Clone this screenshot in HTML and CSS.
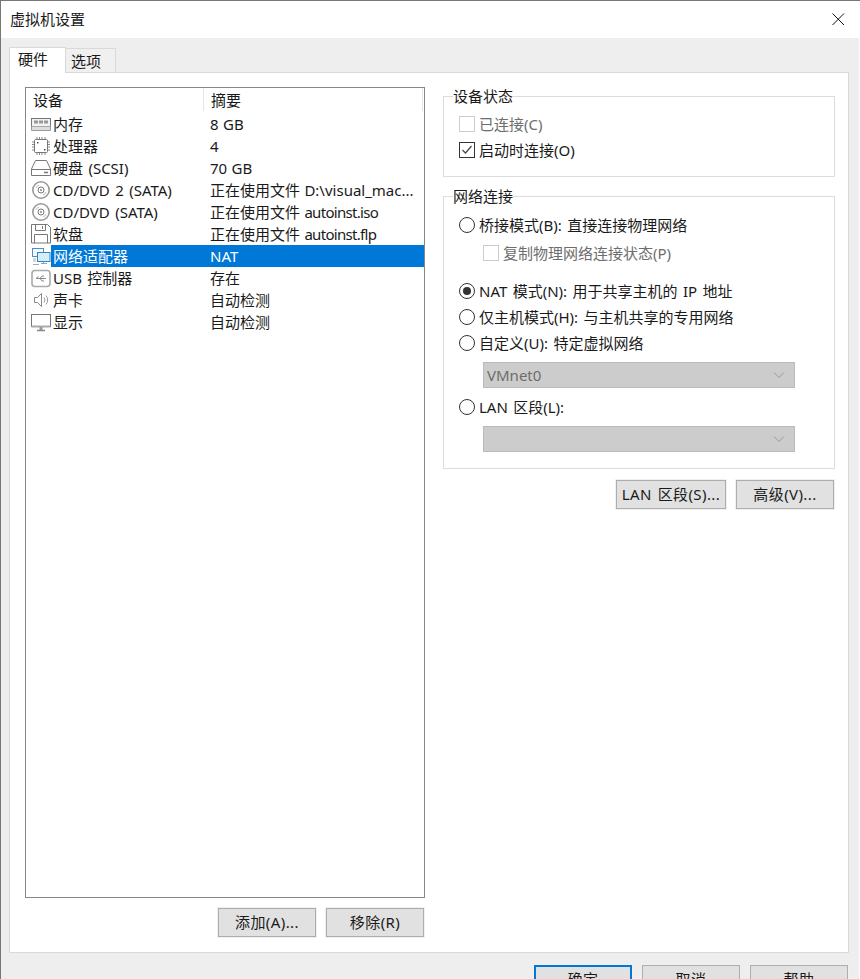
FILE: index.html
```html
<!DOCTYPE html>
<html lang="zh-CN">
<head>
    <meta charset="UTF-8">
    <meta name="viewport" content="width=device-width, initial-scale=1.0">
    <title>虚拟机设置</title>
    <link rel="stylesheet" href="styles.css">
</head>
<body>
    <div class="window">
        <div class="titlebar">
            <span class="title">虚拟机设置</span>
            <svg class="close" width="16" height="16" viewBox="0 0 16 16"><path d="M2.500 2.500l11.500 11.500M14 2.500L2.500 14" stroke="#111" stroke-width="1" fill="none"/></svg>
        </div>

        <div class="dialog">
            <div class="tabs">
                <div class="tab tab-active">硬件</div>
                <div class="tab">选项</div>
            </div>

            <div class="panel">
                <div class="left-col">
                    <div class="device-list">
                        <div class="list-head">
                            <div class="head-name">设备</div>
                            <div class="head-value">摘要</div>
                        </div>

                        <div class="row">
                            <svg class="icon" viewBox="0 0 20 20"><rect x="0.500" y="4.500" width="19" height="8" fill="#f2f2f2" stroke="#777"/><path d="M3 6.500h4v3H3zM8 6.500h4v3H8zM13 6.500h4v3h-4z" fill="#999"/><path d="M0.500 12.500v4h19v-4" fill="#ddd" stroke="#999"/></svg>
                            <div class="row-body"><span class="name">内存</span><span class="value">8 GB</span></div>
                        </div>
                        <div class="row">
                            <svg class="icon" viewBox="0 0 20 20"><rect x="3.500" y="3.500" width="13" height="13" rx="1" fill="#fff" stroke="#777"/><path d="M6 1v2M8.500 1v2M11 1v2M14 1v2M6 17v2M8.500 17v2M11 17v2M14 17v2M1 6h2M1 8.500h2M1 11h2M1 14h2M17 6h2M17 8.500h2M17 11h2M17 14h2" stroke="#888"/><path d="M6 6h1.500v1.500H6zM13 13h1.500v1.500H13z" fill="#555"/></svg>
                            <div class="row-body"><span class="name">处理器</span><span class="value">4</span></div>
                        </div>
                        <div class="row">
                            <svg class="icon" viewBox="0 0 20 20"><path d="M4.500 2.500h11l4 8.500v6.500H0.500V11z" fill="#fff" stroke="#777"/><path d="M0.500 11.500h19" stroke="#777"/><path d="M13 14.500h4" stroke="#777" stroke-width="1.500"/></svg>
                            <div class="row-body"><span class="name">硬盘 (SCSI)</span><span class="value">70 GB</span></div>
                        </div>
                        <div class="row">
                            <svg class="icon" viewBox="0 0 20 20"><circle cx="10" cy="10" r="8.200" fill="#fff" stroke="#999" stroke-width="1.600"/><circle cx="10" cy="10" r="3" fill="none" stroke="#777"/><circle cx="10" cy="10" r="1" fill="#888"/><path d="M5 8a5.500 5.500 0 0 1 3-3M15 12a5.500 5.500 0 0 1-3 3" fill="none" stroke="#bbb"/></svg>
                            <div class="row-body"><span class="name">CD/DVD 2 (SATA)</span><span class="value">正在使用文件 D:\visual_mac...</span></div>
                        </div>
                        <div class="row">
                            <svg class="icon" viewBox="0 0 20 20"><circle cx="10" cy="10" r="8.200" fill="#fff" stroke="#999" stroke-width="1.600"/><circle cx="10" cy="10" r="3" fill="none" stroke="#777"/><circle cx="10" cy="10" r="1" fill="#888"/><path d="M5 8a5.500 5.500 0 0 1 3-3M15 12a5.500 5.500 0 0 1-3 3" fill="none" stroke="#bbb"/></svg>
                            <div class="row-body"><span class="name">CD/DVD (SATA)</span><span class="value">正在使用文件 <span class="file">autoinst.iso</span></span></div>
                        </div>
                        <div class="row">
                            <svg class="icon" viewBox="0 0 20 20"><path d="M0.500 0.500h16l3 3v15.500H0.500z" fill="#fff" stroke="#777"/><path d="M4.500 0.500v6h10v-6M3.500 19v-8.500h13V19" fill="none" stroke="#777"/><path d="M11.500 2v3" stroke="#777"/></svg>
                            <div class="row-body"><span class="name">软盘</span><span class="value">正在使用文件 <span class="file">autoinst.flp</span></span></div>
                        </div>
                        <div class="row row-selected">
                            <svg class="icon" viewBox="0 0 20 20"><rect x="1.500" y="2.500" width="11" height="8" fill="#f4f8fb" stroke="#4f8fc0"/><rect x="6.500" y="6.500" width="12.500" height="9" fill="#d8ecf8" stroke="#2f86c4"/><path d="M10 17.500h6M12.500 15.500v2" stroke="#7aa9c9"/><path d="M2 13h3M2 15h3M2 18.500h6" stroke="#aaa"/></svg>
                            <div class="row-body"><span class="name">网络适配器</span><span class="value">NAT</span></div>
                        </div>
                        <div class="row">
                            <svg class="icon" viewBox="0 0 20 20"><rect x="1" y="2.500" width="18" height="16" rx="3" fill="#fff" stroke="#aaa" stroke-width="1.600"/><path d="M5 10.500h10M5 10.500l2.500-2M9 10.500l2-2.500h2M9 10.500l2 2.500h2" fill="none" stroke="#888"/></svg>
                            <div class="row-body"><span class="name">USB 控制器</span><span class="value">存在</span></div>
                        </div>
                        <div class="row">
                            <svg class="icon" viewBox="0 0 20 20"><path d="M3.500 7.500h3l4-4v13l-4-4h-3z" fill="#fff" stroke="#888"/><path d="M13 7.500a4 4 0 0 1 0 5M15 5.500a7 7 0 0 1 0 9" fill="none" stroke="#999"/></svg>
                            <div class="row-body"><span class="name">声卡</span><span class="value">自动检测</span></div>
                        </div>
                        <div class="row">
                            <svg class="icon" viewBox="0 0 20 20"><rect x="0.500" y="2.500" width="19" height="12" fill="#fff" stroke="#777"/><path d="M0.500 14.500h19" stroke="#aaa" stroke-width="2"/><path d="M6 18.500h8" stroke="#888" stroke-width="1.500"/><path d="M10 15v3" stroke="#999" stroke-width="3"/></svg>
                            <div class="row-body"><span class="name">显示</span><span class="value">自动检测</span></div>
                        </div>
                    </div>
                    <div class="btn-row">
                        <button class="btn">添加(A)...</button>
                        <button class="btn">移除(R)</button>
                    </div>
                </div>

                <div class="right-col">
                    <div class="group">
                        <div class="legend">设备状态</div>
                        <div class="option option-first disabled"><span class="check"></span>已连接(C)</div>
                        <div class="option">
                            <span class="check check-on"><svg width="14" height="14" viewBox="0 0 14 14"><path d="M2.500 7l3 3 6-7" fill="none" stroke="#444" stroke-width="1.200"/></svg></span>启动时连接(O)
                        </div>
                    </div>

                    <div class="group group-net">
                        <div class="legend">网络连接</div>
                        <div class="option option-bridge"><span class="radio"></span>桥接模式(B): 直接连接物理网络</div>
                        <div class="option sub disabled"><span class="check"></span>复制物理网络连接状态(P)</div>
                        <div class="option option-nat"><span class="radio radio-on"></span>NAT 模式(N): 用于共享主机的 IP 地址</div>
                        <div class="option"><span class="radio"></span>仅主机模式(H): 与主机共享的专用网络</div>
                        <div class="option"><span class="radio"></span>自定义(U): 特定虚拟网络</div>
                        <div class="combo">
                            <span class="combo-text">VMnet0</span>
                            <svg width="12" height="8" viewBox="0 0 12 8"><path d="M1 1.500l5 5 5-5" fill="none" stroke="#999"/></svg>
                        </div>
                        <div class="option option-lan"><span class="radio"></span>LAN 区段(L):</div>
                        <div class="combo">
                            <span class="combo-text"></span>
                            <svg width="12" height="8" viewBox="0 0 12 8"><path d="M1 1.500l5 5 5-5" fill="none" stroke="#999"/></svg>
                        </div>
                    </div>

                    <div class="btn-row net-buttons">
                        <button class="btn btn-lan">LAN 区段(S)...</button>
                        <button class="btn">高级(V)...</button>
                    </div>
                </div>
            </div>

            <div class="footer">
                <button class="btn btn-default">确定</button>
                <button class="btn">取消</button>
                <button class="btn">帮助</button>
            </div>
        </div>
    </div>
</body>
</html>
```

FILE: styles.css
```css
* {
    margin: 0;
    padding: 0;
    box-sizing: border-box;
    font-family: "Noto Sans", "Noto Sans CJK SC", sans-serif;
}

html, body {
    height: 100%;
    overflow: hidden;
    background: #fff;
}

body {
    font-size: 15px;
    color: #1a1a1a;
    word-spacing: 1.5px;
}

.window {
    width: 860px;
    height: 979px;
    overflow: hidden;
    border-top: 1px solid #777;
    border-left: 1px solid #777;
}

.titlebar {
    height: 37px;
    padding: 0 13px 1px 9px;
    display: flex;
    justify-content: space-between;
    align-items: center;
}

.title {
    line-height: 36px;
}

.close {
    margin-right: 1px;
}

.dialog {
    width: 858px;
    background: #eee;
    padding: 8px 0 0 8px;
    height: 941px;
}

.tabs {
    display: flex;
    align-items: flex-end;
    height: 26px;
}

.tab {
    width: 50px;
    height: 24px;
    background: #f0f0f0;
    border: 1px solid #d9d9d9;
    border-left: none;
    border-bottom: none;
    padding-left: 5px;
    line-height: 24px;
}

.tab-active {
    width: 57px;
    height: 26px;
    background: #fff;
    border-left: 1px solid #d9d9d9;
    padding-left: 8px;
    line-height: 22px;
    position: relative;
    top: 1px;
}

.panel {
    width: 840px;
    height: 881px;
    background: #fff;
    border: 1px solid #d9d9d9;
    padding: 14px 0 0 15px;
    display: flex;
    gap: 18px;
}

.left-col {
    width: 400px;
}

.device-list {
    height: 811px;
    border: 1px solid #828790;
}

.list-head {
    display: flex;
    height: 25px;
    line-height: 25px;
}

.head-name {
    width: 178px;
    padding-left: 7px;
    height: 23px;
    border-right: 1px solid #e5e5e5;
}

.head-value {
    flex: 1;
    padding-left: 7px;
    height: 23px;
    border-right: 1px solid #e5e5e5;
    margin-right: 1px;
}

.row {
    display: flex;
    align-items: center;
    height: 22px;
    padding-left: 5px;
}

.icon {
    width: 20px;
    height: 20px;
    flex: none;
}

.row-body {
    flex: 1;
    display: flex;
    height: 22px;
    line-height: 22px;
    padding-left: 2px;
}

.name {
    width: 157px;
    white-space: nowrap;
}

.value {
    white-space: nowrap;
    word-spacing: 0.5px;
}

.file {
    letter-spacing: -0.7px;
}

.row-selected .row-body {
    background: #0078d7;
    color: #fff;
}

.btn-row {
    display: flex;
    justify-content: flex-end;
    gap: 10px;
    margin: 10px 1px 0 0;
}

.btn {
    width: 98px;
    height: 29px;
    padding-bottom: 2px;
    background: #e1e1e1;
    border: 1px solid #adadad;
    box-shadow: 0 0 0 1px #f0f0f0;
    font-size: 15px;
    letter-spacing: 0.4px;
    word-spacing: 1.5px;
    color: #1a1a1a;
    white-space: nowrap;
}

.btn-lan {
    width: 110px;
}

.btn-default {
    border: 2px solid #0078d7;
}

.right-col {
    width: 392px;
    padding-top: 9px;
}

.group {
    border: 1px solid #dcdcdc;
    padding: 0 15px 13px;
}

.group-net {
    margin-top: 19px;
    padding-bottom: 16px;
}

.legend {
    width: fit-content;
    height: 20px;
    margin: -10px 0 0 -6px;
    line-height: 18px;
    background: #fff;
}

.option {
    display: flex;
    align-items: center;
    gap: 4px;
    height: 26px;
    padding-bottom: 2px;
    white-space: nowrap;
}

.option-first {
    margin-top: 4px;
}

.option-bridge {
    margin-top: 5px;
}

.option-nat {
    margin-top: 12px;
}

.option-lan {
    margin-top: 6px;
}

.sub {
    margin: 2px 0 0 24px;
}

.disabled {
    color: #6d6d6d;
}

.check {
    width: 16px;
    height: 16px;
    flex: none;
    margin-top: 2px;
    border: 1px solid #ccc;
    display: flex;
    align-items: center;
    justify-content: center;
}

.check-on {
    border-color: #333;
}

.radio {
    width: 16px;
    height: 16px;
    flex: none;
    margin-top: 2px;
    border: 1px solid #333;
    border-radius: 50%;
    display: flex;
    align-items: center;
    justify-content: center;
}

.radio-on::after {
    content: "";
    width: 8px;
    height: 8px;
    border-radius: 50%;
    background: #333;
}

.combo {
    width: 312px;
    height: 26px;
    margin: 6px 0 0 24px;
    padding: 0 9px 0 3px;
    background: #ccc;
    border: 1px solid #bbb;
    color: #6d6d6d;
    display: flex;
    align-items: center;
    justify-content: space-between;
}

.combo-text {
    line-height: 24px;
    padding-bottom: 1px;
}

.net-buttons {
    margin-top: 11px;
}

.footer {
    display: flex;
    justify-content: flex-end;
    gap: 10px;
    width: 839px;
    margin-top: 12px;
}
```
